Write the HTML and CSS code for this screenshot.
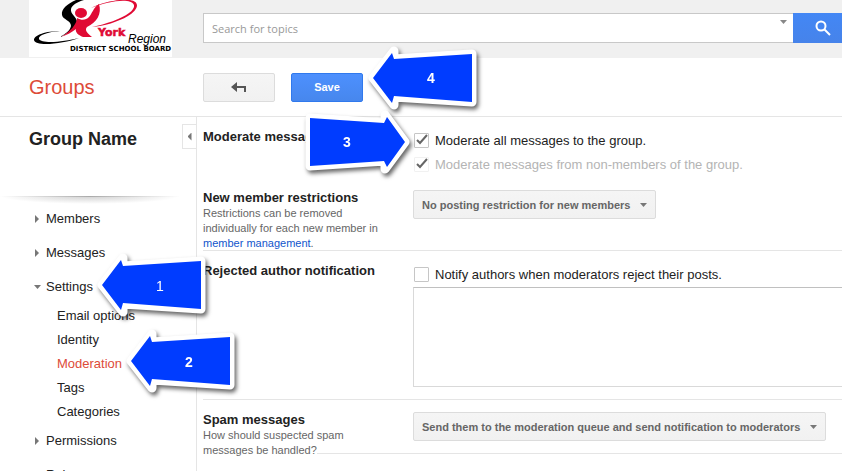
FILE: index.html
```html
<!DOCTYPE html>
<html lang="en">
<head>
  <meta charset="UTF-8">
  <meta name="viewport" content="width=device-width, initial-scale=1.0">
  <title>Groups - Moderation</title>
  <link rel="stylesheet" href="styles.css">
</head>
<body>
  <svg class="defs" width="0" height="0" aria-hidden="true">
    <symbol id="arrow-left" viewBox="0 0 120 64" overflow="visible">
      <path class="arrow-edge" d="M10 32L31 5V13L109 8V56L31 51V59Z"/>
      <path class="arrow-fill" d="M10 32L29 7L31 13L109 8V56L31 50L29 57Z"/>
    </symbol>
    <symbol id="arrow-right" viewBox="0 0 120 64" overflow="visible">
      <path class="arrow-edge" d="M110 32L90 5V13L15 8V56L90 51V59Z"/>
      <path class="arrow-fill" d="M110 32L92 7L89 13L15 8V56L89 51L92 57Z"/>
    </symbol>
  </svg>

  <div class="topbar">
    <a href="#" class="logo" aria-label="York Region District School Board">
      <svg width="143" height="57" viewBox="0 0 143 57">
        <path d="M47 0C38 4 32 9 33 15C34 20 42 20 42 26C41 31 36 34 31 37C40 33 47 28 48 22C48 17 41 14 42 9C43 5 48 2 55 0Z"/>
        <path d="M31 31C17 31 5 35 5 40C6 47 34 44 50 38C35 42 12 44 10 39C9 35 19 32 31 31Z"/>
        <ellipse class="red" cx="52" cy="13" rx="6" ry="5"/>
        <path class="red" d="M70 4C73 14 68 22 58 27C55 30 59 34 63 37H54C49 35 46 32 47 29C43 32 38 35 32 37C41 32 48 24 48 18C53 21 57 20 60 17C63 14 64 8 70 4Z"/>
        <path class="red" d="M62 8C76 1 92-1 101 0C112 2 109 10 99 16C89 22 75 26 63 27C77 24 92 19 100 13C108 7 106 2 98 1C88 0 75 3 62 8Z"/>
        <text class="logo-york" x="69" y="36">York</text>
        <text class="logo-region" x="99" y="43">Region</text>
        <text class="logo-board" x="41" y="51">DISTRICT SCHOOL BOARD</text>
      </svg>
    </a>
    <form class="search">
      <div class="search-box">
        <input type="text" placeholder="Search for topics" aria-label="Search for topics">
        <button type="button" class="search-options" aria-label="Search options"></button>
      </div>
      <button type="button" class="search-button" aria-label="Search">
        <svg width="16" height="16" viewBox="0 0 16 16">
          <circle cx="6" cy="6" r="4.500"/>
          <path d="M9.500 9.500L15 15"/>
        </svg>
      </button>
    </form>
  </div>

  <div class="toolbar">
    <h1>Groups</h1>
    <button type="button" class="button" aria-label="Back">
      <svg width="16" height="12" viewBox="0 0 16 12">
        <path d="M0 6L6 1V5H15V11H13V7H6V11Z"/>
      </svg>
    </button>
    <button type="button" class="button button-primary">Save</button>
  </div>

  <div class="page">
    <div class="sidebar">
      <div class="group-head">
        <h2>Group Name</h2>
        <button type="button" class="collapse" aria-label="Collapse sidebar"></button>
      </div>
      <div class="shade"></div>
      <ul class="nav">
        <li><a href="#">Members</a></li>
        <li><a href="#">Messages</a></li>
        <li>
          <a href="#" class="open">Settings</a>
          <ul class="subnav">
            <li><a href="#">Email options</a></li>
            <li><a href="#">Identity</a></li>
            <li><a href="#" class="active">Moderation</a></li>
            <li><a href="#">Tags</a></li>
            <li><a href="#">Categories</a></li>
          </ul>
        </li>
        <li><a href="#">Permissions</a></li>
        <li><a href="#">Roles</a></li>
      </ul>
    </div>

    <div class="content">
      <div class="row row-moderate">
        <div class="row-label"><h3>Moderate messages</h3></div>
        <div class="row-control">
          <label class="check"><input type="checkbox" checked>Moderate all messages to the group.</label>
          <label class="check disabled"><input type="checkbox" checked disabled>Moderate messages from non-members of the group.</label>
        </div>
      </div>
      <div class="row row-restrictions">
        <div class="row-label">
          <h3><label for="restrictions">New member restrictions</label></h3>
          <p><span>Restrictions can be removed individually for each new member in <a href="#">member management</a>.</span></p>
        </div>
        <div class="row-control">
          <div class="dropdown">
            <select id="restrictions">
              <option>No posting restriction for new members</option>
            </select>
          </div>
        </div>
      </div>
      <div class="row">
        <div class="row-label"><h3>Rejected author notification</h3></div>
        <div class="row-control">
          <label class="check"><input type="checkbox">Notify authors when moderators reject their posts.</label>
          <textarea aria-label="Rejection message"></textarea>
        </div>
      </div>
      <div class="row">
        <div class="row-label">
          <h3><label for="spam">Spam messages</label></h3>
          <p><span>How should suspected spam messages be handled?</span></p>
        </div>
        <div class="row-control">
          <div class="dropdown">
            <select id="spam">
              <option>Send them to the moderation queue and send notification to moderators</option>
            </select>
          </div>
        </div>
      </div>
      <div class="row"></div>
    </div>
  </div>

  <!-- step callouts -->
  <svg class="callout step-1" width="120" height="64"><use href="#arrow-left"/><text x="68" y="38">1</text></svg>
  <svg class="callout step-2" width="120" height="64"><use href="#arrow-left"/><text x="68" y="38">2</text></svg>
  <svg class="callout step-4" width="120" height="64"><use href="#arrow-left"/><text x="68" y="37">4</text></svg>
  <svg class="callout step-3" width="120" height="64"><use href="#arrow-right"/><text x="52" y="37">3</text></svg>
</body>
</html>
```
FILE: styles.css
```css
* {
  box-sizing: border-box;
}

body {
  position: relative;
  display: flex;
  flex-direction: column;
  height: 100vh;
  margin: 0;
  overflow: hidden;
  font-family: "Liberation Sans", Arial, sans-serif;
  font-size: 13px;
  color: #222;
  background: #fff;
}

h1, h2, h3, p, ul {
  margin: 0;
  padding: 0;
}

ul {
  list-style: none;
}

a {
  color: #15c;
  text-decoration: none;
}

button, input, select, textarea {
  font-family: inherit;
  margin: 0;
}

.defs {
  position: absolute;
}

/* top bar */
.topbar {
  display: flex;
  flex: none;
  height: 58px;
  padding-left: 29px;
  background: #f0f0f0;
}

.logo {
  width: 143px;
  height: 57px;
  margin-right: 31px;
  background: #fff;
}

.logo svg {
  display: block;
}

.red {
  fill: #e00a34;
}

.logo-york {
  font: bold 11px "DejaVu Sans", sans-serif;
  fill: #e00a34;
  stroke: #e00a34;
  stroke-width: 0.5;
}

.logo-region {
  font: italic 12px "Liberation Sans", sans-serif;
}

.logo-board {
  font: bold 7px "DejaVu Sans", sans-serif;
}

.search {
  display: flex;
  flex: 1;
  height: 30px;
  margin-top: 13px;
}

.search-box {
  display: flex;
  flex: 1;
  align-items: flex-start;
  background: #fff;
  border: 1px solid #c8c8c8;
  border-right: none;
}

.search-box input {
  flex: 1;
  height: 28px;
  padding: 0 8px;
  font-family: "Open Sans", sans-serif;
  font-size: 11px;
  border: none;
  outline: none;
  background: none;
}

.search-box input::placeholder {
  color: #999;
}

.search-options {
  width: 7px;
  height: 4px;
  margin: 6px 6px 0 0;
  padding: 0;
  border: none;
  background: #888;
  clip-path: polygon(0 0, 100% 0, 50% 100%);
}

.search-button {
  width: 49px;
  padding: 0 0 0 22px;
  text-align: left;
  border: none;
  background: linear-gradient(#4387f5, #4683ea);
}

.search-button svg {
  display: block;
  fill: none;
  stroke: #fff;
  stroke-width: 2;
}

/* toolbar */
.toolbar {
  display: flex;
  flex: none;
  align-items: center;
  gap: 16px;
  height: 59px;
  padding-left: 29px;
  border-bottom: 1px solid #e5e5e5;
}

.toolbar h1 {
  width: 158px;
  font-size: 20px;
  font-weight: normal;
  color: #dd4b39;
}

.button {
  width: 72px;
  height: 29px;
  padding: 0;
  font-size: 11px;
  font-weight: bold;
  border: 1px solid #dcdcdc;
  border-radius: 2px;
  background: linear-gradient(#f5f5f5, #f1f1f1);
}

.button svg {
  display: block;
  margin: 0 auto;
  fill: #555;
}

.button-primary {
  color: #fff;
  border-color: #3079ed;
  background: linear-gradient(#4d90fe, #4787ed);
}

.page {
  display: flex;
  flex: 1;
  min-height: 0;
}

/* sidebar */
.sidebar {
  flex: none;
  width: 197px;
  padding-top: 7px;
  border-right: 1px solid #e5e5e5;
}

.group-head {
  display: flex;
  justify-content: space-between;
  height: 72px;
  padding-left: 29px;
}

.group-head h2 {
  font-size: 18px;
  line-height: 30px;
}

.collapse {
  display: flex;
  align-items: center;
  justify-content: center;
  width: 14px;
  height: 25px;
  padding: 0;
  border: 1px solid #e5e5e5;
  border-right: none;
  background: #fff;
}

.collapse::before {
  content: "";
  width: 4px;
  height: 8px;
  background: #777;
  clip-path: polygon(100% 0, 100% 100%, 0 50%);
}

.shade {
  height: 8px;
  margin: 0 16px -3px 0;
  background:
    linear-gradient(to right, #fff, #aaa, #fff) top / 100% 1px no-repeat,
    radial-gradient(ellipse at top, #d0d0d0, rgba(255, 255, 255, 0) 70%);
}

.nav a {
  display: flex;
  align-items: center;
  gap: 7px;
  padding: 2px 0 0 35px;
  line-height: 32px;
  color: #222;
}

.nav a::before {
  content: "";
  width: 4px;
  height: 8px;
  background: #777;
  clip-path: polygon(0 0, 100% 50%, 0 100%);
}

.nav a.open {
  gap: 5px;
  padding-left: 34px;
}

.nav a.open::before {
  width: 7px;
  height: 4px;
  clip-path: polygon(0 0, 100% 0, 50% 100%);
}

.nav .subnav a {
  display: block;
  padding-left: 57px;
  line-height: 22px;
}

.nav .subnav a::before {
  content: none;
}

.nav .subnav a.active {
  color: #dd4b39;
}

/* settings form */
.content {
  flex: 1;
  min-width: 0;
  padding-left: 6px;
}

.row {
  display: grid;
  grid-template-columns: 210px 1fr;
  padding: 10px 0 12px;
  border-top: 1px solid #e5e5e5;
}

.row-moderate {
  padding-bottom: 1px;
  border-top: none;
}

.row-restrictions {
  min-height: 72px;
  border-top: none;
}

.row-label h3 {
  padding-top: 2px;
  font-size: 13px;
  line-height: 16px;
}

/* long hints may run past the row's bottom line */
.row-label p {
  width: 180px;
  margin-bottom: -17px;
  font-size: 11px;
  line-height: 15px;
  color: #666;
}

.row-label p span {
  background: #fff;
}

.row-control {
  padding-top: 2px;
}

.check {
  display: flex;
  align-items: center;
  gap: 6px;
  height: 24px;
  padding: 0 0 1px 1px;
}

.check input {
  appearance: none;
  width: 15px;
  height: 15px;
  border: 1px solid #c6c6c6;
  border-radius: 1px;
  background: #fff;
}

.check input:checked {
  background: #fff url("data:image/svg+xml,%3Csvg xmlns='http://www.w3.org/2000/svg' viewBox='0 0 13 13'%3E%3Cpath d='M2 6L5 9L12 1' fill='none' stroke='%23666' stroke-width='2'/%3E%3C/svg%3E");
}

.check.disabled {
  color: #b4b4b4;
}

.check.disabled input {
  border-color: #f1f1f1;
}

.row-control textarea {
  display: block;
  width: 100%;
  height: 100px;
  resize: none;
  border: 1px solid #d9d9d9;
  border-top-color: #c0c0c0;
  border-right: none;
}

.dropdown {
  display: inline-flex;
  align-items: center;
  vertical-align: top;
}

.dropdown select {
  appearance: none;
  height: 29px;
  padding: 0 24px 0 8px;
  font-size: 11px;
  font-weight: bold;
  color: #666;
  border: 1px solid #dcdcdc;
  border-radius: 2px;
  background: linear-gradient(#f5f5f5, #f1f1f1);
}

.dropdown::after {
  content: "";
  width: 7px;
  height: 4px;
  margin: 1px 9px 0 -16px;
  background: #777;
  clip-path: polygon(0 0, 100% 0, 50% 100%);
  pointer-events: none;
}

/* callouts over the page */
.callout {
  position: absolute;
  overflow: visible;
  pointer-events: none;
  filter: drop-shadow(2px 3px 2px rgba(0, 0, 0, 0.6));
}

.callout text {
  font-size: 14px;
  font-weight: bold;
  text-anchor: middle;
  fill: #fff;
}

.arrow-edge {
  fill: #fff;
  stroke: #fff;
  stroke-width: 9;
  stroke-linejoin: round;
}

.arrow-fill {
  fill: #003cff;
}

.step-1 {
  left: 92px;
  top: 253px;
}

.step-1 text {
  font-weight: normal;
}

.step-2 {
  left: 121px;
  top: 329px;
}

.step-3 {
  left: 295px;
  top: 110px;
}

.step-4 {
  left: 363px;
  top: 46px;
}
```
